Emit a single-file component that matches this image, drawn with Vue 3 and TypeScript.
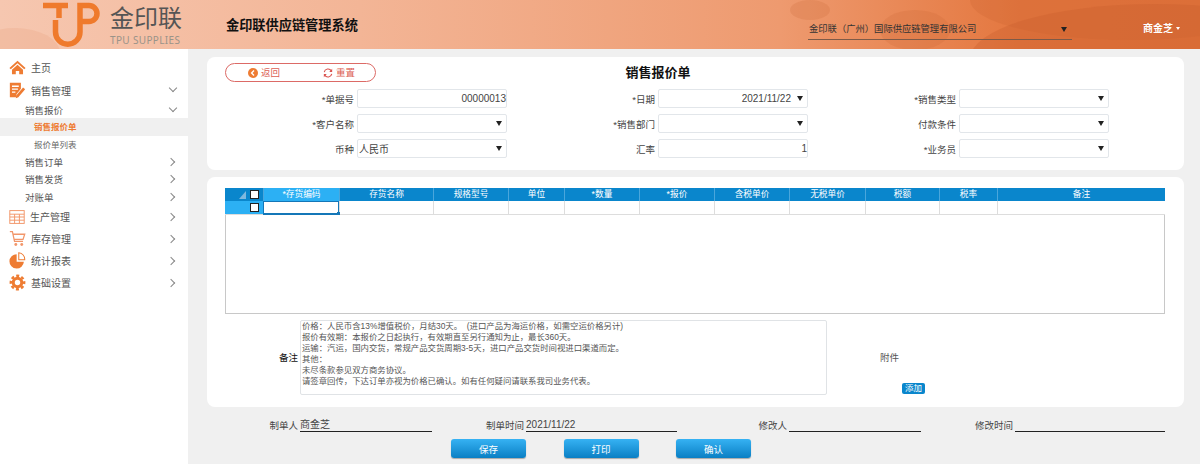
<script setup lang="ts">
interface Field { label: string; value?: string; kind: 'text' | 'select'; align?: string }
const fields: Field[] = [
  { label: '*单据号', value: '00000013', kind: 'text', align: 'right' },
  { label: '*日期', value: '2021/11/22', kind: 'select', align: 'right' },
  { label: '*销售类型', kind: 'select' },
  { label: '*客户名称', kind: 'select' },
  { label: '*销售部门', kind: 'select' },
  { label: '付款条件', kind: 'select' },
  { label: '币种', value: '人民币', kind: 'select' },
  { label: '汇率', value: '1', kind: 'text', align: 'right' },
  { label: '*业务员', kind: 'select' },
]
const cols = [
  { t: '*存货编码', w: 76 }, { t: '存货名称', w: 94 }, { t: '规格型号', w: 75 }, { t: '单位', w: 56 },
  { t: '*数量', w: 75 }, { t: '*报价', w: 75 }, { t: '含税单价', w: 75 }, { t: '无税单价', w: 76 },
  { t: '税额', w: 74 }, { t: '税率', w: 58 }, { t: '备注', w: 168 },
]
const subs = ['销售订单', '销售发货', '对账单']
const notes = `价格：人民币含13%增值税价，月结30天。  (进口产品为海运价格，如需空运价格另计)
报价有效期：本报价之日起执行，有效期直至另行通知为止，最长360天。
运输：汽运，国内交货，常规产品交货周期3-5天，进口产品交货时间视进口渠道而定。
其他：
未尽条款参见双方商务协议。
请签章回传，下达订单亦视为价格已确认。如有任何疑问请联系我司业务代表。`
</script>

<template>
  <div class="page">
    <header class="top">
      <i class="blob b1"></i><i class="blob b2"></i><i class="blob b3"></i><i class="blob b4"></i><i class="blob b5"></i>
      <div class="logo">
        <svg class="mark" width="60" height="49" viewBox="0 0 60 49">
          <g fill="none" stroke="#ef7a2c" stroke-width="5.500">
            <path d="M0 5.500H25M16 5.500V18" />
            <path d="M12.500 20V32a12.250 12.250 0 0 0 24.500 0V5.500H46a8 8 0 0 1 0 16H37" />
          </g>
        </svg>
        <div class="brand">
          <div class="cn">金印联</div>
          <div class="en">TPU SUPPLIES</div>
        </div>
      </div>
      <div class="sys">金印联供应链管理系统</div>
      <div class="company"><span>金印联（广州）国际供应链管理有限公司</span><b class="arrow dark"></b></div>
      <div class="user">商金芝<b class="arrow white"></b></div>
    </header>

    <div class="body">
      <aside class="side">
        <div class="m1">
          <svg viewBox="0 0 20 20" width="17" height="17"><path fill="#ee7c33" d="M10 2 0.500 10.500l1.600 1.600L10 5l7.900 7.100 1.600-1.600zM3.500 12.500V18h4.500v-4h4v4h4.500v-5.500L10 6.800z"/></svg>
          <span>主页</span>
        </div>
        <div class="m1 sales">
          <svg viewBox="0 0 20 20" width="17" height="17"><path fill="#ee7c33" d="M1 1h13v7l-5 6-1 4H1z"/><path stroke="#fff" stroke-width="1.500" d="M3.500 5h8M3.500 8.500h7M3.500 12h4"/><path fill="#ee7c33" d="M16.500 6.500l2.500 2-8 9.500-3 1 .5-3z"/></svg>
          <span>销售管理</span><em class="chev down"></em>
        </div>
        <div class="m2 first"><span>销售报价</span><em class="chev down"></em></div>
        <div class="m3 on">销售报价单</div>
        <div class="m3 last">报价单列表</div>
        <div v-for="s in subs" :key="s" class="m2"><span>{{ s }}</span><em class="chev"></em></div>
        <div class="m1">
          <svg viewBox="0 0 20 20" width="16" height="16"><g fill="none" stroke="#f2966a" stroke-width="1.200"><rect x="1" y="2" width="18" height="16" /><path d="M1 6.500h18M1 10h18M1 14h18M7 6.500V18M13 6.500V18"/></g></svg>
          <span>生产管理</span><em class="chev"></em>
        </div>
        <div class="m1">
          <svg viewBox="0 0 20 20" width="17" height="17"><path fill="none" stroke="#f2966a" stroke-width="1.500" d="M1 2h3l2.500 11.500h10M5 5h13.500l-2 6H6"/><circle cx="8" cy="17" r="1.700" fill="#f2966a"/><circle cx="15" cy="17" r="1.700" fill="#f2966a"/></svg>
          <span>库存管理</span><em class="chev"></em>
        </div>
        <div class="m1">
          <svg viewBox="0 0 20 20" width="17" height="17"><path fill="#ee7c33" d="M9 2.500a8.500 8.500 0 1 0 8.500 9H9z"/><path fill="none" stroke="#ee7c33" stroke-width="1.200" d="M11.500 1a7.500 7.500 0 0 1 7 8h-7z"/></svg>
          <span>统计报表</span><em class="chev"></em>
        </div>
        <div class="m1">
          <svg viewBox="0 0 20 20" width="17" height="17"><g fill="none" stroke="#ee7c33"><circle cx="10" cy="10" r="5" stroke-width="3.600"/><circle cx="10" cy="10" r="7.800" stroke-width="3" stroke-dasharray="3.500 2.627" stroke-dashoffset="1.750"/></g></svg>
          <span>基础设置</span><em class="chev"></em>
        </div>
      </aside>

      <main class="main">
        <section class="card head-card">
          <div class="title-row">
            <div class="pill">
              <span class="pill-item">
                <svg viewBox="0 0 12 12" width="10" height="10"><circle cx="6" cy="6" r="6" fill="#ee7c33"/><path d="M7.200 3 4.300 6l2.900 3" fill="none" stroke="#fff" stroke-width="1.600"/></svg>返回
              </span>
              <span class="pill-item">
                <svg viewBox="0 0 12 12" width="10" height="10"><g fill="none" stroke="#d9534f" stroke-width="1.300"><path d="M1.500 5A4.600 4.600 0 0 1 10 3.500"/><path d="M10.500 7A4.600 4.600 0 0 1 2 8.500"/></g><path fill="#d9534f" d="M11 1v3.800H7.500zM1 11V7.200h3.500z"/></svg>重置
              </span>
            </div>
            <h1>销售报价单</h1>
          </div>
          <div class="form">
            <div v-for="f in fields" :key="f.label" class="field">
              <label>{{ f.label }}</label>
              <div class="input" :class="{ right: f.align === 'right' }">
                <span>{{ f.value }}</span><b v-if="f.kind === 'select'" class="arrow dark"></b>
              </div>
            </div>
          </div>
        </section>

        <section class="card grid-card">
          <div class="grid">
            <div class="g-row g-head">
              <div class="corner"><i class="tri"></i><i class="check"></i></div>
              <div v-for="(c, i) in cols" :key="c.t" class="g-cell" :class="{ sel: i === 0 }" :style="{ width: c.w + 'px' }">{{ c.t }}</div>
            </div>
            <div class="g-row g-data">
              <div class="corner light"><i class="check"></i></div>
              <div v-for="(c, i) in cols" :key="c.t" class="g-cell" :class="{ cur: i === 0 }" :style="{ width: c.w + 'px' }"></div>
            </div>
          </div>
          <div class="extra">
            <label class="note-label">备注</label>
            <div class="notes">{{ notes }}</div>
            <div class="attach">
              <span class="att-label">附件</span>
              <span class="add">添加</span>
            </div>
          </div>
        </section>

        <div class="meta">
          <div class="mf m-a"><label>制单人</label><span>商金芝</span></div>
          <div class="mf m-b"><label>制单时间</label><span>2021/11/22</span></div>
          <div class="mf m-c"><label>修改人</label><span></span></div>
          <div class="mf m-d"><label>修改时间</label><span></span></div>
        </div>
        <div class="btns">
          <button>保存</button><button>打印</button><button>确认</button>
        </div>
      </main>
    </div>
  </div>
</template>

<style>
html, body { margin: 0; padding: 0; background: #f0f0f0; }
</style>

<style scoped>
.page { width: 1200px; height: 464px; overflow: hidden; font-family: "Liberation Sans", "Noto Sans CJK SC", sans-serif; font-size: 9.500px; color: #333; background: #f0f0f0; }
.top { position: relative; height: 49px; overflow: hidden; display: flex; align-items: flex-start; background: linear-gradient(90deg, #f6c7b0 0%, #f3b596 30%, #ee9a6f 65%, #e4773f 85%, #e2733b 100%); }
.blob { position: absolute; border-radius: 50%; }
.b1 { left: 970px; top: -40px; width: 320px; height: 80px; background: rgba(205, 100, 50, .28); }
.b2 { left: 970px; top: 4px; width: 370px; height: 110px; background: rgba(200, 95, 45, .35); }
.b3 { left: 880px; top: 10px; width: 70px; height: 40px; background: rgba(200, 100, 50, .2); }
.b4 { left: 790px; top: 0; width: 40px; height: 20px; background: rgba(200, 100, 50, .2); }
.b5 { left: -30px; top: 28px; width: 90px; height: 50px; background: rgba(230, 150, 110, .2); }
.logo { position: relative; display: flex; margin-left: 43px; width: 170px; height: 49px; }
.mark { flex: none; }
.brand { margin-left: 7px; }
.cn { font-size: 24px; line-height: 30px; margin-top: 4px; color: #555; white-space: nowrap; }
.en { font-size: 10px; line-height: 12px; color: #9a9389; letter-spacing: .35px; white-space: nowrap; font-family: "Noto Sans", sans-serif; }
.sys { position: relative; margin: 17px 0 0 13px; width: 582px; font-size: 13.200px; line-height: 18px; font-weight: 700; color: #111; }
.company { position: relative; margin-top: 18px; width: 263px; height: 17px; border-bottom: 1px solid #7c5a48; display: flex; justify-content: space-between; align-items: flex-start; padding: 4px 0 0 1px; color: #333; line-height: 14px; font-size: 9.300px; }
.company .arrow { margin: 5px 5px 0 0; }
.user { position: absolute; right: 20px; top: 21px; color: #fff; font-weight: 700; line-height: 16px; font-size: 10px; }
.arrow { display: inline-block; width: 0; height: 0; border-left: 3px solid transparent; border-right: 3px solid transparent; flex: none; }
.arrow.dark { border-top: 5px solid #222; }
.arrow.white { border-top: 3px solid #fff; border-left-width: 2.500px; border-right-width: 2.500px; vertical-align: 2px; margin-left: 3px; }

.body { display: flex; height: 415px; }
.side { width: 188px; flex: none; background: #fff; padding-top: 7px; box-sizing: border-box; }
.m1 { display: flex; align-items: center; height: 22px; padding-left: 9px; font-size: 10px; color: #555; position: relative; }
.m1 span { margin-left: 5px; }
.sales { margin-top: 1px; }
.m2 { display: flex; align-items: center; height: 17.500px; padding-left: 25px; color: #555; position: relative; }
.m2.first { height: 17px; }
.m3 { height: 18px; line-height: 18px; padding-left: 34px; color: #666; font-size: 8.500px; }
.m3.last { height: 17px; }
.m3.on { background: #f0f0f0; color: #ee7c33; font-weight: 700; }
.chev { position: absolute; left: 170px; top: 50%; width: 5px; height: 5px; margin-top: -3px; border-right: 1px solid #888; border-top: 1px solid #888; transform: rotate(45deg); margin-left: -2px; }
.chev.down { transform: rotate(135deg); margin-top: -5px; margin-left: 0; }

.main { flex: 1; padding: 8px 16px 0 19px; min-width: 0; }
.card { background: #fff; border-radius: 8px; }
.head-card { height: 113px; box-sizing: border-box; padding: 6px 0 0 18px; }
.title-row { position: relative; height: 26px; }
.title-row h1 { position: absolute; left: 0; top: 1px; margin: 0; padding-left: 23px; box-sizing: border-box; width: 843px; text-align: center; font-size: 13px; line-height: 18px; color: #111; font-weight: 700; }
.pill { width: 151px; height: 19px; box-sizing: border-box; border: 1px solid #dc6a66; border-radius: 10px; display: flex; align-items: center; padding-left: 22px; color: #dc5f55; }
.pill-item { display: flex; align-items: center; gap: 3px; width: 75px; flex: none; line-height: 12px; }
.form { display: grid; grid-template-columns: repeat(3, 301px); row-gap: 6px; }
.field { display: flex; align-items: center; }
.field label { width: 132px; text-align: right; padding-right: 3px; box-sizing: border-box; color: #444; white-space: nowrap; }
.input { width: 150px; height: 19px; box-sizing: border-box; border: 1px solid #e2e6ea; border-radius: 2px; display: flex; align-items: center; justify-content: space-between; padding: 0 0 0 1px; color: #444; background: #fff; font-size: 10px; }
.input .arrow { margin-right: 4px; }
.input.right span { flex: 1; text-align: right; }
.input.right .arrow { margin-left: 6px; }

.grid-card { margin-top: 7px; height: 230px; padding: 11px 19px 0 18px; box-sizing: border-box; }
.grid { height: 126px; box-sizing: border-box; border-left: 1px solid #c8c8c8; border-right: 1px solid #c8c8c8; border-bottom: 1px solid #c8c8c8; width: 940px; }
.g-row { display: flex; height: 13px; margin-left: -1px; margin-right: -1px; }
.g-data { border-bottom: 1px solid #ddd; }
.corner { width: 38px; flex: none; background: #0a86cc; display: flex; align-items: center; justify-content: flex-end; padding-right: 3px; box-sizing: border-box; position: relative; }
.corner.light { background: #2cb0f4; }
.tri { position: absolute; left: 14px; top: 3px; width: 0; height: 0; border-left: 7px solid transparent; border-bottom: 8px solid #7fb8de; }
.check { width: 7px; height: 7px; background: #fff; border: 1px solid #222; margin-right: 1px; }
.g-cell { flex: none; box-sizing: border-box; text-align: center; line-height: 13px; font-size: 8.700px; color: #fff; background: #0a86cc; border-left: 1px solid #4aa6dc; }
.g-cell.sel { background: #2cb0f4; }
.g-data .g-cell { background: #fff; border-left: 1px solid #ddd; }
.g-data .g-cell.cur { border: 1px solid #1477b8; border-bottom-width: 2px; position: relative; height: 14px; }
.g-data .g-cell.cur::after { content: ""; position: absolute; right: -2px; bottom: -2px; width: 3px; height: 3px; background: #1477b8; }
.extra { display: flex; margin-top: 6px; }
.note-label { width: 75px; text-align: right; padding-right: 2px; box-sizing: border-box; line-height: 75px; color: #111; }
.notes { width: 527px; height: 75px; box-sizing: border-box; border: 1px solid #e0e3e6; border-radius: 2px; padding: 0 1px; white-space: pre-wrap; line-height: 11px; font-size: 8.400px; color: #555; overflow: hidden; }
.attach { position: relative; flex: 1; }
.att-label { position: absolute; left: 53px; top: 31px; line-height: 14px; color: #555; }
.add { position: absolute; left: 75px; top: 63px; width: 23px; height: 11px; line-height: 11px; background: #0a86cc; color: #fff; text-align: center; font-size: 8.500px; border-radius: 2px; }

.meta { display: flex; height: 25px; position: relative; }
.mf { display: flex; align-items: flex-end; position: relative; }
.mf label { color: #444; text-align: right; padding-right: 2px; line-height: 15px; margin-bottom: -1px; white-space: nowrap; }
.mf span { display: block; border-bottom: 1px solid #222; height: 14px; line-height: 15px; color: #444; font-size: 10px; }
.m-a { margin-left: 62.500px; }
.m-a span { width: 132px; }
.m-b { margin-left: 54px; }
.m-b span { width: 151px; }
.m-c { margin-left: 81.500px; }
.m-c span { width: 132px; }
.m-d { margin-left: 54px; }
.m-d span { width: 150px; }
.btns { display: flex; gap: 37.500px; margin: 7px 0 0 244px; }
button { width: 75px; height: 19px; padding: 0; border: 0; border-radius: 3px; color: #fff; font: inherit; background: linear-gradient(#36b2f3, #0a7fc4); box-shadow: 0 1px 1px rgba(0,0,0,.3); }
</style>
